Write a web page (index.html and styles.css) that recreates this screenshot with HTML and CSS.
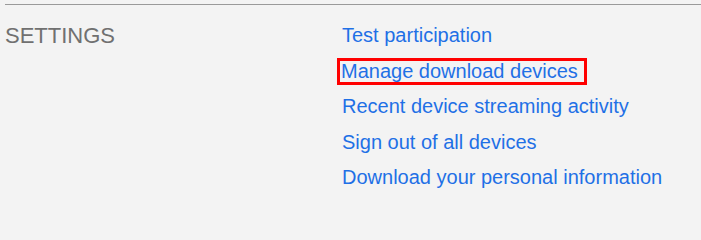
FILE: index.html
```html
<!DOCTYPE html>
<html lang="en">
<head>
<meta charset="utf-8">
<title>Settings</title>
<link rel="stylesheet" href="styles.css">
</head>
<body>
<section class="settings">
  <h2 class="settings-title">SETTINGS</h2>
  <ul class="settings-links">
    <li><a href="#">Test participation</a></li>
    <li><a href="#" class="highlighted">Manage download devices</a></li>
    <li><a href="#">Recent device streaming activity</a></li>
    <li><a href="#">Sign out of all devices</a></li>
    <li><a href="#">Download your personal information</a></li>
  </ul>
</section>
</body>
</html>
```

FILE: styles.css
```css
html, body {
  margin: 0;
  padding: 0;
  background: #f3f3f3;
  font-family: "Liberation Sans", Arial, sans-serif;
}

body {
  padding: 4px 0 0 5px;
}

.settings {
  border-top: 1px solid #9a9a9a;
  display: flex;
  align-items: flex-start;
  padding-top: 13px;
}

.settings-title {
  width: 337px;
  margin: 0;
  font-size: 22px;
  line-height: 36px;
  font-weight: normal;
  color: #707070;
}

.settings-links {
  list-style: none;
  margin: 0;
  padding: 0;
}

.settings-links li {
  font-size: 20px;
  line-height: 35.5px;
}

.settings-links a {
  color: #1f70e6;
  text-decoration: none;
}

.settings-links a.highlighted {
  display: inline-block;
  line-height: 21px;
  border: 3px solid #ff0000;
  padding: 0 6px 0 1px;
  margin-left: -5px;
}
```
